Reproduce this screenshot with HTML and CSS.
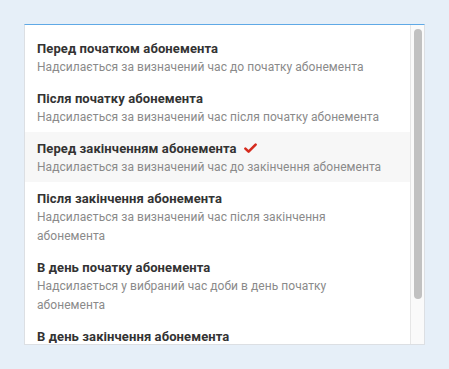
FILE: index.html
```html
<!DOCTYPE html>
<html lang="uk">
<head>
<meta charset="utf-8">
<link rel="stylesheet" href="styles.css">
</head>
<body>
<div class="page">
  <div class="dropdown">
    <div class="viewport">
      <ul class="list">
        <li class="item">
          <div class="title">Перед початком абонемента</div>
          <div class="desc">Надсилається за визначений час до початку абонемента</div>
        </li>
        <li class="item">
          <div class="title">Після початку абонемента</div>
          <div class="desc">Надсилається за визначений час після початку абонемента</div>
        </li>
        <li class="item selected">
          <div class="title">Перед закінченням абонемента
            <svg class="check" width="13" height="11" viewBox="0 0 13 11"><path d="M1.4 5.6 L4.6 8.6 L11.6 1.6" fill="none" stroke="#d52b1e" stroke-width="2.6" stroke-linecap="round" stroke-linejoin="round"/></svg>
          </div>
          <div class="desc">Надсилається за визначений час до закінчення абонемента</div>
        </li>
        <li class="item">
          <div class="title">Після закінчення абонемента</div>
          <div class="desc">Надсилається за визначений час після закінчення абонемента</div>
        </li>
        <li class="item">
          <div class="title">В день початку абонемента</div>
          <div class="desc">Надсилається у вибраний час доби в день початку абонемента</div>
        </li>
        <li class="item">
          <div class="title">В день закінчення абонемента</div>
          <div class="desc">Надсилається у вибраний час доби в день закінчення абонемента</div>
        </li>
      </ul>
    </div>
    <div class="scrollbar"><div class="thumb"></div></div>
  </div>
</div>
</body>
</html>
```
FILE: styles.css
```css
html, body {
  margin: 0;
  padding: 0;
  background: #e6eff8;
  font-family: Roboto, "Noto Sans", sans-serif;
}
.page {
  padding: 24px 24px 0 24px;
  width: 401px;
}
.dropdown {
  display: flex;
  background: #fff;
  border: 1px solid #dcdfe3;
  border-top: 1px solid #5fa9e6;
  height: 319px;
}
.viewport {
  flex: 1;
  overflow: hidden;
}
.scrollbar {
  width: 14px;
  background: #fafafa;
  border-left: 1px solid #e6e6e6;
  padding: 4px 2px 0 3px;
  box-sizing: content-box;
  width: 8px;
}
.thumb {
  height: 270px;
  background: #c1c1c1;
  border-radius: 4px;
}
.list {
  list-style: none;
  margin: 0;
  padding: 7px 0 7px 0;
}
.item {
  padding: 7px 22px 5px 12px;
}
.item.selected {
  background: #f7f7f7;
}
.title {
  font-size: 13px;
  font-weight: 700;
  color: #333;
  line-height: 19px;
  letter-spacing: 0.1px;
  display: flex;
  align-items: center;
  gap: 7px;
}
.check {
  display: block;
}
.desc {
  font-size: 12px;
  color: #8a8a8a;
  line-height: 19px;
  letter-spacing: 0.05px;
}
```
